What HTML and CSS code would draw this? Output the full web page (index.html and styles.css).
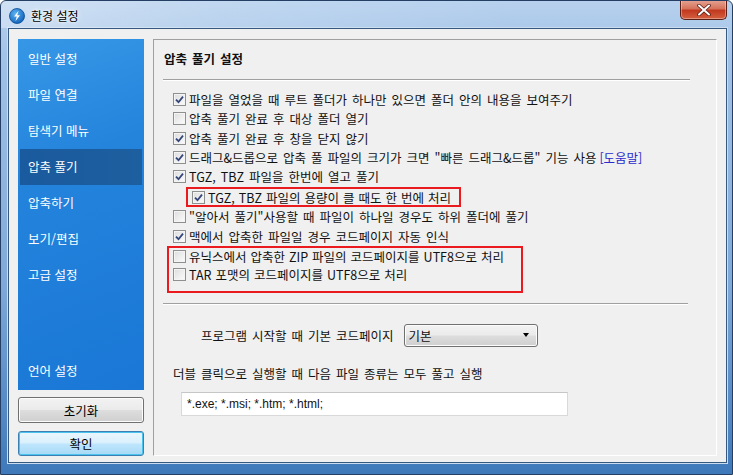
FILE: index.html
```html
<!DOCTYPE html>
<html lang="ko">
<head>
    <meta charset="UTF-8">
    <title>환경 설정</title>
    <link rel="stylesheet" href="styles.css">
</head>
<body>
    <div class="window">
        <div class="titlebar">
            <svg class="app-icon" width="16" height="16" viewBox="0 0 16 16">
                <defs>
                    <radialGradient id="ig" cx="0.4" cy="0.35" r="0.7">
                        <stop offset="0" stop-color="#5fb4f2"/>
                        <stop offset="1" stop-color="#0d5fb8"/>
                    </radialGradient>
                </defs>
                <circle cx="8" cy="8" r="7.5" fill="url(#ig)" stroke="#0a4a92" stroke-width="0.8"/>
                <path d="M9.6 2.8 L5 8.6 L7.8 8.6 L6.4 13.2 L11 7.2 L8.2 7.2 Z" fill="#fff"/>
            </svg>
            <span class="title">환경 설정</span>
            <div class="close">
                <svg width="16" height="12" viewBox="0 0 16 12">
                    <path d="M3 1.5 L13 10.5 M13 1.5 L3 10.5" stroke="#5a1e14" stroke-width="3.6" stroke-linecap="round"/>
                    <path d="M3 1.5 L13 10.5 M13 1.5 L3 10.5" stroke="#fff" stroke-width="2" stroke-linecap="round"/>
                </svg>
            </div>
        </div>

        <div class="client">
            <div class="sidebar">
                <div class="nav">
                    <div class="nav-item">일반 설정</div>
                    <div class="nav-item">파일 연결</div>
                    <div class="nav-item">탐색기 메뉴</div>
                    <div class="nav-item active">압축 풀기</div>
                    <div class="nav-item">압축하기</div>
                    <div class="nav-item">보기/편집</div>
                    <div class="nav-item">고급 설정</div>
                    <div class="nav-item last">언어 설정</div>
                </div>
                <button class="btn">초기화</button>
                <button class="btn default">확인</button>
            </div>

            <div class="panel">
                <div class="panel-title">압축 풀기 설정</div>
                <div class="sep"></div>

                <div class="options">
                    <div class="row"><span class="box"><svg viewBox="0 0 9 9"><path d="M1 4.6 L3.5 7.2 L8 1.6" /></svg></span>파일을 열었을 때 루트 폴더가 하나만 있으면 폴더 안의 내용을 보여주기</div>
                    <div class="row"><span class="box"></span>압축 풀기 완료 후 대상 폴더 열기</div>
                    <div class="row"><span class="box"><svg viewBox="0 0 9 9"><path d="M1 4.6 L3.5 7.2 L8 1.6" /></svg></span>압축 풀기 완료 후 창을 닫지 않기</div>
                    <div class="row"><span class="box"><svg viewBox="0 0 9 9"><path d="M1 4.6 L3.5 7.2 L8 1.6" /></svg></span>드래그&amp;드롭으로 압축 풀 파일의 크기가 크면 "빠른 드래그&amp;드롭" 기능 사용 <a class="help">[도움말]</a></div>
                    <div class="row"><span class="box"><svg viewBox="0 0 9 9"><path d="M1 4.6 L3.5 7.2 L8 1.6" /></svg></span>TGZ, TBZ 파일을 한번에 열고 풀기</div>
                    <div class="mark mark-sub">
                        <div class="row"><span class="box"><svg viewBox="0 0 9 9"><path d="M1 4.6 L3.5 7.2 L8 1.6" /></svg></span>TGZ, TBZ 파일의 용량이 클 때도 한 번에 처리</div>
                    </div>
                    <div class="row"><span class="box"></span>"알아서 풀기"사용할 때 파일이 하나일 경우도 하위 폴더에 풀기</div>
                    <div class="row"><span class="box"><svg viewBox="0 0 9 9"><path d="M1 4.6 L3.5 7.2 L8 1.6" /></svg></span>맥에서 압축한 파일일 경우 코드페이지 자동 인식</div>
                    <div class="mark mark-utf">
                        <div class="row"><span class="box"></span>유닉스에서 압축한 ZIP 파일의 코드페이지를 UTF8으로 처리</div>
                        <div class="row"><span class="box"></span>TAR 포맷의 코드페이지를 UTF8으로 처리</div>
                    </div>
                </div>

                <div class="sep sep-low"></div>

                <div class="codepage">
                    <span>프로그램 시작할 때 기본 코드페이지</span>
                    <div class="select">
                        <span>기본</span>
                        <span class="arrow"></span>
                    </div>
                </div>

                <div class="exec-label">더블 클릭으로 실행할 때 다음 파일 종류는 모두 풀고 실행</div>
                <div class="input">*.exe; *.msi; *.htm; *.html;</div>
            </div>
        </div>
    </div>
</body>
</html>
```

FILE: styles.css
```css
body {
    margin: 0;
    font-family: "Noto Sans CJK KR", "Noto Sans", sans-serif;
    font-size: 12.5px;
    color: #111;
    background: #fff;
}

.window {
    width: 733px;
    height: 475px;
    box-sizing: border-box;
    display: flex;
    flex-direction: column;
    border: 1px solid #243f63;
    border-radius: 6px 6px 0 0;
    background: linear-gradient(180deg, #b7d1ee 0%, #a2c2e6 12%, #7fa9d8 60%, #3f79ba 100%);
    overflow: hidden;
}

/* title bar */
.titlebar {
    height: 29px;
    display: flex;
    align-items: center;
    position: relative;
    background: linear-gradient(90deg, rgba(255,255,255,0.35) 0%, rgba(255,255,255,0.15) 30%, rgba(255,255,255,0) 70%);
}

.app-icon {
    margin-left: 8px;
    margin-top: 2px;
}

.title {
    margin-left: 6px;
    margin-top: 2px;
    font-size: 12px;
    color: #000;
    text-shadow: 0 0 6px #fff, 0 0 3px #fff;
}

.close {
    position: absolute;
    top: -1px;
    right: 5px;
    width: 45px;
    height: 19px;
    display: flex;
    justify-content: center;
    align-items: center;
    border: 1px solid #5b1f16;
    border-top: none;
    border-radius: 0 0 5px 5px;
    background: linear-gradient(180deg, #e6a595 0%, #d6735c 45%, #c2391f 55%, #d4603f 100%);
    box-shadow: inset 0 0 0 1px rgba(255,255,255,0.35);
}

/* client area */
.client {
    flex: 1;
    display: flex;
    gap: 9px;
    margin: 0 5px 11px 7px;
    padding: 10px 9px 6px 9px;
    background: #f0f0f0;
    border: 1px solid #37597f;
    box-shadow: 0 0 0 1px #c9dcf0;
}

.sidebar {
    width: 126px;
    display: flex;
    flex-direction: column;
}

.nav {
    height: 351px;
    box-sizing: border-box;
    padding-top: 2px;
    display: flex;
    flex-direction: column;
    background: linear-gradient(160deg, #3797e6 0%, #2484dc 35%, #1a77d6 100%);
}

.nav-item {
    height: 36px;
    line-height: 36px;
    margin: 0 2px;
    padding-left: 8px;
    color: #fff;
}

.nav-item.active {
    background: linear-gradient(90deg, #1a5a9e, #1d5f9f);
}

.nav-item.last {
    margin-top: auto;
    margin-bottom: 1px;
}

.btn {
    height: 26px;
    margin-top: 7px;
    padding: 0;
    font-family: inherit;
    font-size: 12.5px;
    color: #000;
    border: 1px solid #707070;
    border-radius: 3px;
    background: linear-gradient(180deg, #f2f2f2 0%, #ebebeb 48%, #dddddd 52%, #cfcfcf 100%);
    box-shadow: inset 0 0 0 1px #fcfcfc;
}

.btn.default {
    height: 25px;
    margin-top: 8px;
    border-color: #3c7fb1;
    background: linear-gradient(180deg, #eaf6fd 0%, #d9f0fc 48%, #bee6fd 52%, #a7d9f5 100%);
    box-shadow: inset 0 0 0 1px #4ac4ee;
}

/* right panel */
.panel {
    flex: 1;
    padding: 11px 0 0 10px;
    word-spacing: 1.5px;
    border: 1px solid #a0a0a0;
    border-right-color: #fff;
    border-bottom-color: #fff;
}

.panel-title {
    font-weight: bold;
    line-height: 16px;
}

.sep {
    width: 527px;
    height: 1px;
    margin: 12px 0 0 -1px;
    background: #a0a0a0;
    border-bottom: 1px solid #fff;
}

.sep.sep-low {
    width: 525px;
    margin-top: 10px;
}

.options {
    margin-top: 9px;
    padding-left: 9px;
    display: flex;
    flex-direction: column;
    align-items: flex-start;
}

.row {
    height: 19.25px;
    display: flex;
    align-items: center;
    white-space: nowrap;
}

.box {
    width: 11px;
    height: 11px;
    margin-right: 3px;
    display: flex;
    justify-content: center;
    align-items: center;
    border: 1px solid #8e8f8f;
    background: linear-gradient(135deg, #dcdcdc 0%, #f0f0f0 60%, #fbfbfb 100%);
    box-shadow: inset 0 0 0 1px #f4f4f4;
}

.box svg {
    width: 9px;
    height: 9px;
}

.box path {
    fill: none;
    stroke: #34467a;
    stroke-width: 1.8;
}

.help {
    margin-left: 3px;
    color: #2b2bcc;
}

.mark {
    box-sizing: border-box;
    border: 2px solid #ea1a1f;
    word-spacing: 0.5px;
}

.mark-sub {
    width: 275px;
    margin: 1px 0 0 13px;
    padding-left: 4px;
}

.mark-sub .row {
    height: 16px;
}

.mark-utf {
    width: 356px;
    height: 47px;
    margin-left: -6px;
    padding-left: 4px;
}

.mark-utf .row {
    height: 18px;
}

.codepage {
    margin-top: 19px;
    padding-left: 37px;
    display: flex;
    align-items: center;
    gap: 10px;
}

.select {
    width: 134px;
    height: 23px;
    box-sizing: border-box;
    display: flex;
    align-items: center;
    justify-content: space-between;
    padding: 0 8px 0 4px;
    border: 1px solid #707070;
    border-radius: 3px;
    background: linear-gradient(180deg, #f2f2f2 0%, #ebebeb 48%, #dddddd 52%, #cfcfcf 100%);
    box-shadow: inset 0 0 0 1px #fcfcfc;
}

.arrow {
    width: 0;
    height: 0;
    border-left: 3.5px solid transparent;
    border-right: 3.5px solid transparent;
    border-top: 4px solid #000;
}

.exec-label {
    margin-top: 19px;
    padding-left: 9px;
    line-height: 16px;
}

.input {
    width: 387px;
    height: 24px;
    box-sizing: border-box;
    margin: 10px 0 0 17px;
    padding-left: 5px;
    line-height: 22px;
    font-family: "Liberation Sans", Arial, sans-serif;
    font-size: 12px;
    word-spacing: 0;
    background: #fff;
    border: 1px solid #d9d9d9;
    border-top-color: #c6c6c6;
}
```
